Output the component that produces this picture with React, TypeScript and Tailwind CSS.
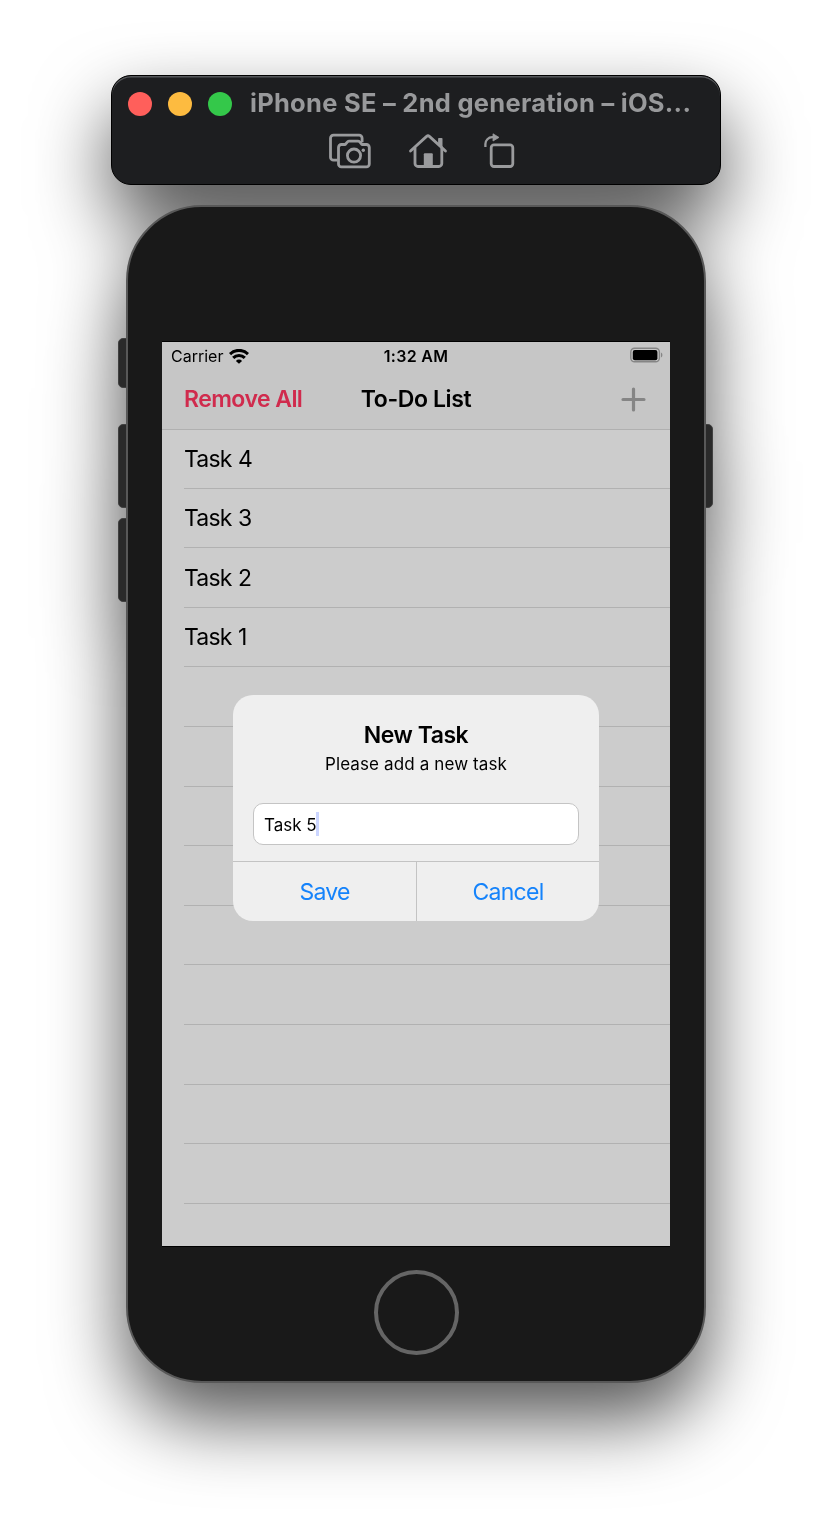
const tasks = ["Task 4", "Task 3", "Task 2", "Task 1"];
const rows = Array.from({ length: 13 }, (_, i) => tasks[i] ?? "");

function ScreenshotIcon() {
  return (
    <svg width="44" height="37" viewBox="0 0 44 37" fill="none" stroke="#9a9b9d" strokeWidth="2.8" strokeLinejoin="round">
      <path d="M10.500 28.200H6.500a3 3 0 0 1-3-3V6.200a3 3 0 0 1 3-3h25.600a3 3 0 0 1 3 3v4" />
      <path d="M14.400 12.500h3.800l2.300-2.600a2.500 2.500 0 0 1 1.900-.8h8.400a2.500 2.500 0 0 1 1.900.8l2.300 2.600h4.400a2.900 2.900 0 0 1 2.900 2.900v16.600a2.900 2.900 0 0 1-2.900 2.900H14.400a2.900 2.900 0 0 1-2.900-2.900V15.400a2.900 2.900 0 0 1 2.900-2.900z" />
      <circle cx="27" cy="23.600" r="6.600" />
      <circle cx="36.300" cy="18.300" r="1.700" fill="#9a9b9d" stroke="none" />
    </svg>
  );
}

function HomeIcon() {
  return (
    <svg width="40" height="37" viewBox="0 0 40 37" fill="none" stroke="#9a9b9d" strokeWidth="2.8" strokeLinecap="round" strokeLinejoin="round">
      <path d="M2.500 19 18.600 4.400a2 2 0 0 1 2.800 0L37.500 19" />
      <path d="M7 16v15.500a3 3 0 0 0 3 3h20.800a3 3 0 0 0 3-3V16" />
      <path d="M30.900 6h2.800a.8.800 0 0 1 .8.800v9.700l-4.400-3.800V6.800a.8.800 0 0 1 .8-.8z" fill="#9a9b9d" stroke="none" />
      <path d="M16.800 21.300h7a1 1 0 0 1 1 1v12.500h-9v-12.500a1 1 0 0 1 1-1z" fill="#9a9b9d" stroke="none" />
    </svg>
  );
}

function RotateIcon() {
  return (
    <svg width="33" height="37" viewBox="0 0 33 37" fill="none" stroke="#9a9b9d" strokeWidth="2.800">
      <rect x="8.200" y="12.900" width="21.600" height="21.600" rx="2.800" />
      <path d="M2.400 15V12a6.800 6.800 0 0 1 6.800-6.800h2.200" strokeWidth="2.300" />
      <path d="M10 1.800 16 5.400 10 9z" fill="#9a9b9d" stroke="#9a9b9d" strokeWidth=".8" strokeLinejoin="round" />
    </svg>
  );
}

function WifiIcon() {
  return (
    <svg width="20" height="15" viewBox="0 0 20 15" fill="none" stroke="#000" strokeWidth="3.100">
      <path d="M1 5.100a12.800 12.800 0 0 1 18 0" />
      <path d="M4.200 8.900a8.300 8.300 0 0 1 11.600 0" />
      <path d="M10 14.800 6.900 11.900a4.400 4.400 0 0 1 6.200 0z" fill="#000" stroke="none" />
    </svg>
  );
}

function BatteryIcon() {
  return (
    <svg width="33" height="17" viewBox="0 0 33 17" fill="none">
      <rect x=".8" y="1.200" width="28.600" height="13.600" rx="3.800" stroke="#858585" strokeWidth="1.400" />
      <rect x="2.800" y="3" width="24.600" height="10.200" rx="2" fill="#000" />
      <path d="M31 5.600a2.700 2.700 0 0 1 0 4.800z" fill="#858585" />
    </svg>
  );
}

function SideButton({ className }: { className: string }) {
  return <div className={`absolute w-[10px] border border-[#414141] bg-[#2a2a2a] ${className}`} />;
}

export default function App() {
  return (
    <div className="flex h-[1532px] w-[832px] flex-col items-center overflow-hidden bg-white pt-[75px] font-['Inter','Liberation_Sans',sans-serif] text-black">
      <div className="flex flex-col items-center [filter:drop-shadow(0_36px_38px_rgba(0,0,0,0.67))]">
        <header className="h-[110px] w-[610px] rounded-[20px] border border-black bg-[#1d1e20] shadow-[inset_0_1.5px_0_#55575a]">
          <div className="flex h-[56px] items-center pl-4">
            <div className="flex gap-4">
              <span className="size-6 rounded-full bg-[#ff5f5b]" />
              <span className="size-6 rounded-full bg-[#fdbb40]" />
              <span className="size-6 rounded-full bg-[#34c84a]" />
            </div>
            <h1 className="mb-0.5 ml-[18px] whitespace-nowrap text-[25.500px] font-bold leading-8 tracking-[0.27px] text-[#98999b]">
              iPhone SE – 2nd generation – iOS...
            </h1>
          </div>
          <div className="flex pl-[215px]">
            <ScreenshotIcon />
            <div className="ml-[37px]"><HomeIcon /></div>
            <div className="ml-[35px]"><RotateIcon /></div>
          </div>
        </header>

        <section className="relative mt-5 h-[1178px] w-[580px]">
          <SideButton className="left-[-8px] top-[133px] h-[50px] rounded-l-[5px]" />
          <SideButton className="left-[-8px] top-[219px] h-[84px] rounded-l-[5px]" />
          <SideButton className="left-[-8px] top-[313px] h-[84px] rounded-l-[5px]" />
          <SideButton className="right-[-7px] top-[219px] h-[84px] rounded-r-[5px]" />

          <div className="relative flex h-full flex-col items-center rounded-[76px] border-2 border-[#585858] bg-[#191919] pt-[134px]">
            <main className="relative flex h-[906px] w-[508px] flex-col overflow-hidden border-y border-black bg-[#cccccc]">
              <div className="h-[88px] shrink-0 border-b-[1.5px] border-[#b0b0b0] bg-[#c6c6c6]">
                <div className="grid h-7 grid-cols-3 items-center pl-[9px] pr-[7px]">
                  <div className="flex items-center gap-[6px] text-[16px]">
                    <span>Carrier</span>
                    <WifiIcon />
                  </div>
                  <span className="pr-[2px] text-center text-[16px] font-semibold tracking-[0.3px]">1:32 AM</span>
                  <div className="mb-px flex justify-end"><BatteryIcon /></div>
                </div>
                <nav className="grid h-[59px] grid-cols-3 items-center pl-[22px] pr-6 text-[23px] font-semibold">
                  <span className="whitespace-nowrap tracking-[-0.55px] text-[#d02b4d]">Remove All</span>
                  <span className="whitespace-nowrap pl-[2px] text-center tracking-[-0.4px]">To-Do List</span>
                  <svg className="mb-px justify-self-end" width="25" height="25" viewBox="0 0 25 25" stroke="#858585" strokeWidth="3.200" strokeLinecap="round">
                    <path d="M12.500 2v21M2 12.500h21" />
                  </svg>
                </nav>
              </div>
              <ul className="-mt-px pl-[22px]">
                {rows.map((task, i) => (
                  <li key={i} className="flex h-[59.600px] items-center border-b border-[#b1b1b1] pt-px text-[23px] tracking-[-0.85px] [word-spacing:1px]">
                    {task}
                  </li>
                ))}
              </ul>

              <div className="absolute left-[71px] top-[353px] flex h-[226px] w-[366px] flex-col overflow-hidden rounded-[20px] bg-[#efefef]">
                <div className="flex h-[166px] flex-col items-center px-5 pt-[24px]">
                  <h2 className="text-[23px] font-semibold leading-8 tracking-[-0.5px]">New Task</h2>
                  <p className="text-[17px] leading-[26px] tracking-[0.12px]">Please add a new task</p>
                  <div className="mt-[26px] flex h-[42px] w-full shrink-0 items-center rounded-[10px] border border-[#c4c4c4] bg-white pl-[10px] text-[17px]">
                    <span className="pt-[3px]">Task 5</span>
                    <span className="-ml-px h-6 w-[3px] bg-[#ccd6ff]" />
                  </div>
                </div>
                <div className="grid h-[60px] grid-cols-[184px_182px] border-t border-[#c3c3c3] text-[23px] tracking-[-0.75px] text-[#1583fb]">
                  <button className="border-r border-[#c3c3c3] pt-[2px]">Save</button>
                  <button className="pt-[2px]">Cancel</button>
                </div>
              </div>
            </main>
            <button className="ml-px mt-[23px] size-[85px] rounded-full border-4 border-[#656565]" aria-label="Home" />
          </div>
        </section>
      </div>
    </div>
  );
}
